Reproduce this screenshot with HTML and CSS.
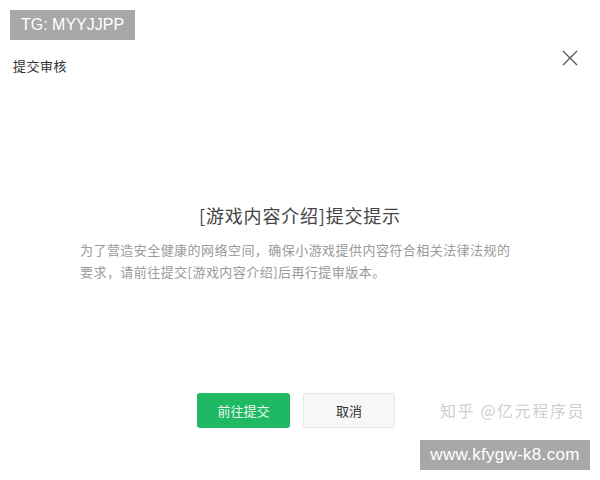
FILE: index.html
```html
<!DOCTYPE html>
<html lang="zh">
<head>
<meta charset="utf-8">
<link rel="stylesheet" href="styles.css">
</head>
<body>
<div class="dialog">
  <div class="header">
    <div class="header-title">提交审核</div>
    <svg class="close" width="16" height="16" viewBox="0 0 16 16"><path d="M1 1 L15 15 M15 1 L1 15" stroke="#555" stroke-width="1.3" fill="none"/></svg>
  </div>
  <div class="content">
    <div class="title">[游戏内容介绍]提交提示</div>
    <p class="desc">为了营造安全健康的网络空间，确保小游戏提供内容符合相关法律法规的<br>要求，请前往提交[游戏内容介绍]后再行提审版本。</p>
  </div>
  <div class="actions">
    <button class="btn primary">前往提交</button>
    <button class="btn default">取消</button>
  </div>
</div>
<div class="badge badge-top">TG: MYYJJPP</div>
<div class="watermark">知乎 @亿元程序员</div>
<div class="badge badge-bottom">www.kfygw-k8.com</div>
</body>
</html>
```
FILE: styles.css
```css
html, body {
  margin: 0;
  padding: 0;
  background: #fff;
  width: 600px;
  height: 480px;
  overflow: hidden;
  font-family: "Noto Sans CJK SC", "Liberation Sans", sans-serif;
}
.dialog {
  display: flex;
  flex-direction: column;
  padding-top: 50px;
}
.header {
  display: flex;
  justify-content: space-between;
  align-items: flex-start;
  padding: 0 22px 0 13px;
}
.header-title {
  margin-top: 7px;
  font-size: 13px;
  line-height: 18px;
  letter-spacing: 0.5px;
  color: #333;
}
.close {
  display: block;
}
.content {
  display: flex;
  flex-direction: column;
  align-items: center;
  margin-top: 128px;
}
.title {
  font-size: 18px;
  line-height: 24px;
  color: #444;
  letter-spacing: 0.8px;
}
.desc {
  margin: 12px 0 0 0;
  align-self: flex-start;
  padding-left: 80px;
  font-size: 13px;
  line-height: 22px;
  letter-spacing: 0.45px;
  color: #9a9a9a;
}
.actions {
  display: flex;
  justify-content: center;
  gap: 13px;
  margin-top: 110px;
  padding-right: 8px;
}
.btn {
  height: 35px;
  border-radius: 3px;
  font-family: inherit;
  font-size: 13px;
  padding: 0;
  cursor: pointer;
}
.primary {
  width: 93px;
  background: #1fb863;
  border: none;
  color: #e8f8ee;
}
.default {
  width: 92px;
  background: #f7f7f7;
  border: 1px solid #e6e6e6;
  color: #333;
}
.badge {
  position: absolute;
  background: #a8a8a8;
  color: #fff;
  font-family: "Liberation Sans", sans-serif;
  font-size: 16px;
  line-height: 30px;
  text-align: center;
}
.badge-top {
  left: 10px;
  top: 10px;
  width: 125px;
}
.badge-bottom {
  left: 420px;
  top: 440px;
  width: 170px;
  font-size: 17px;
  letter-spacing: 0.3px;
}
.watermark {
  position: absolute;
  left: 440px;
  top: 399px;
  font-size: 16px;
  line-height: 22px;
  letter-spacing: 1.6px;
  color: #cfcfcf;
}
```
